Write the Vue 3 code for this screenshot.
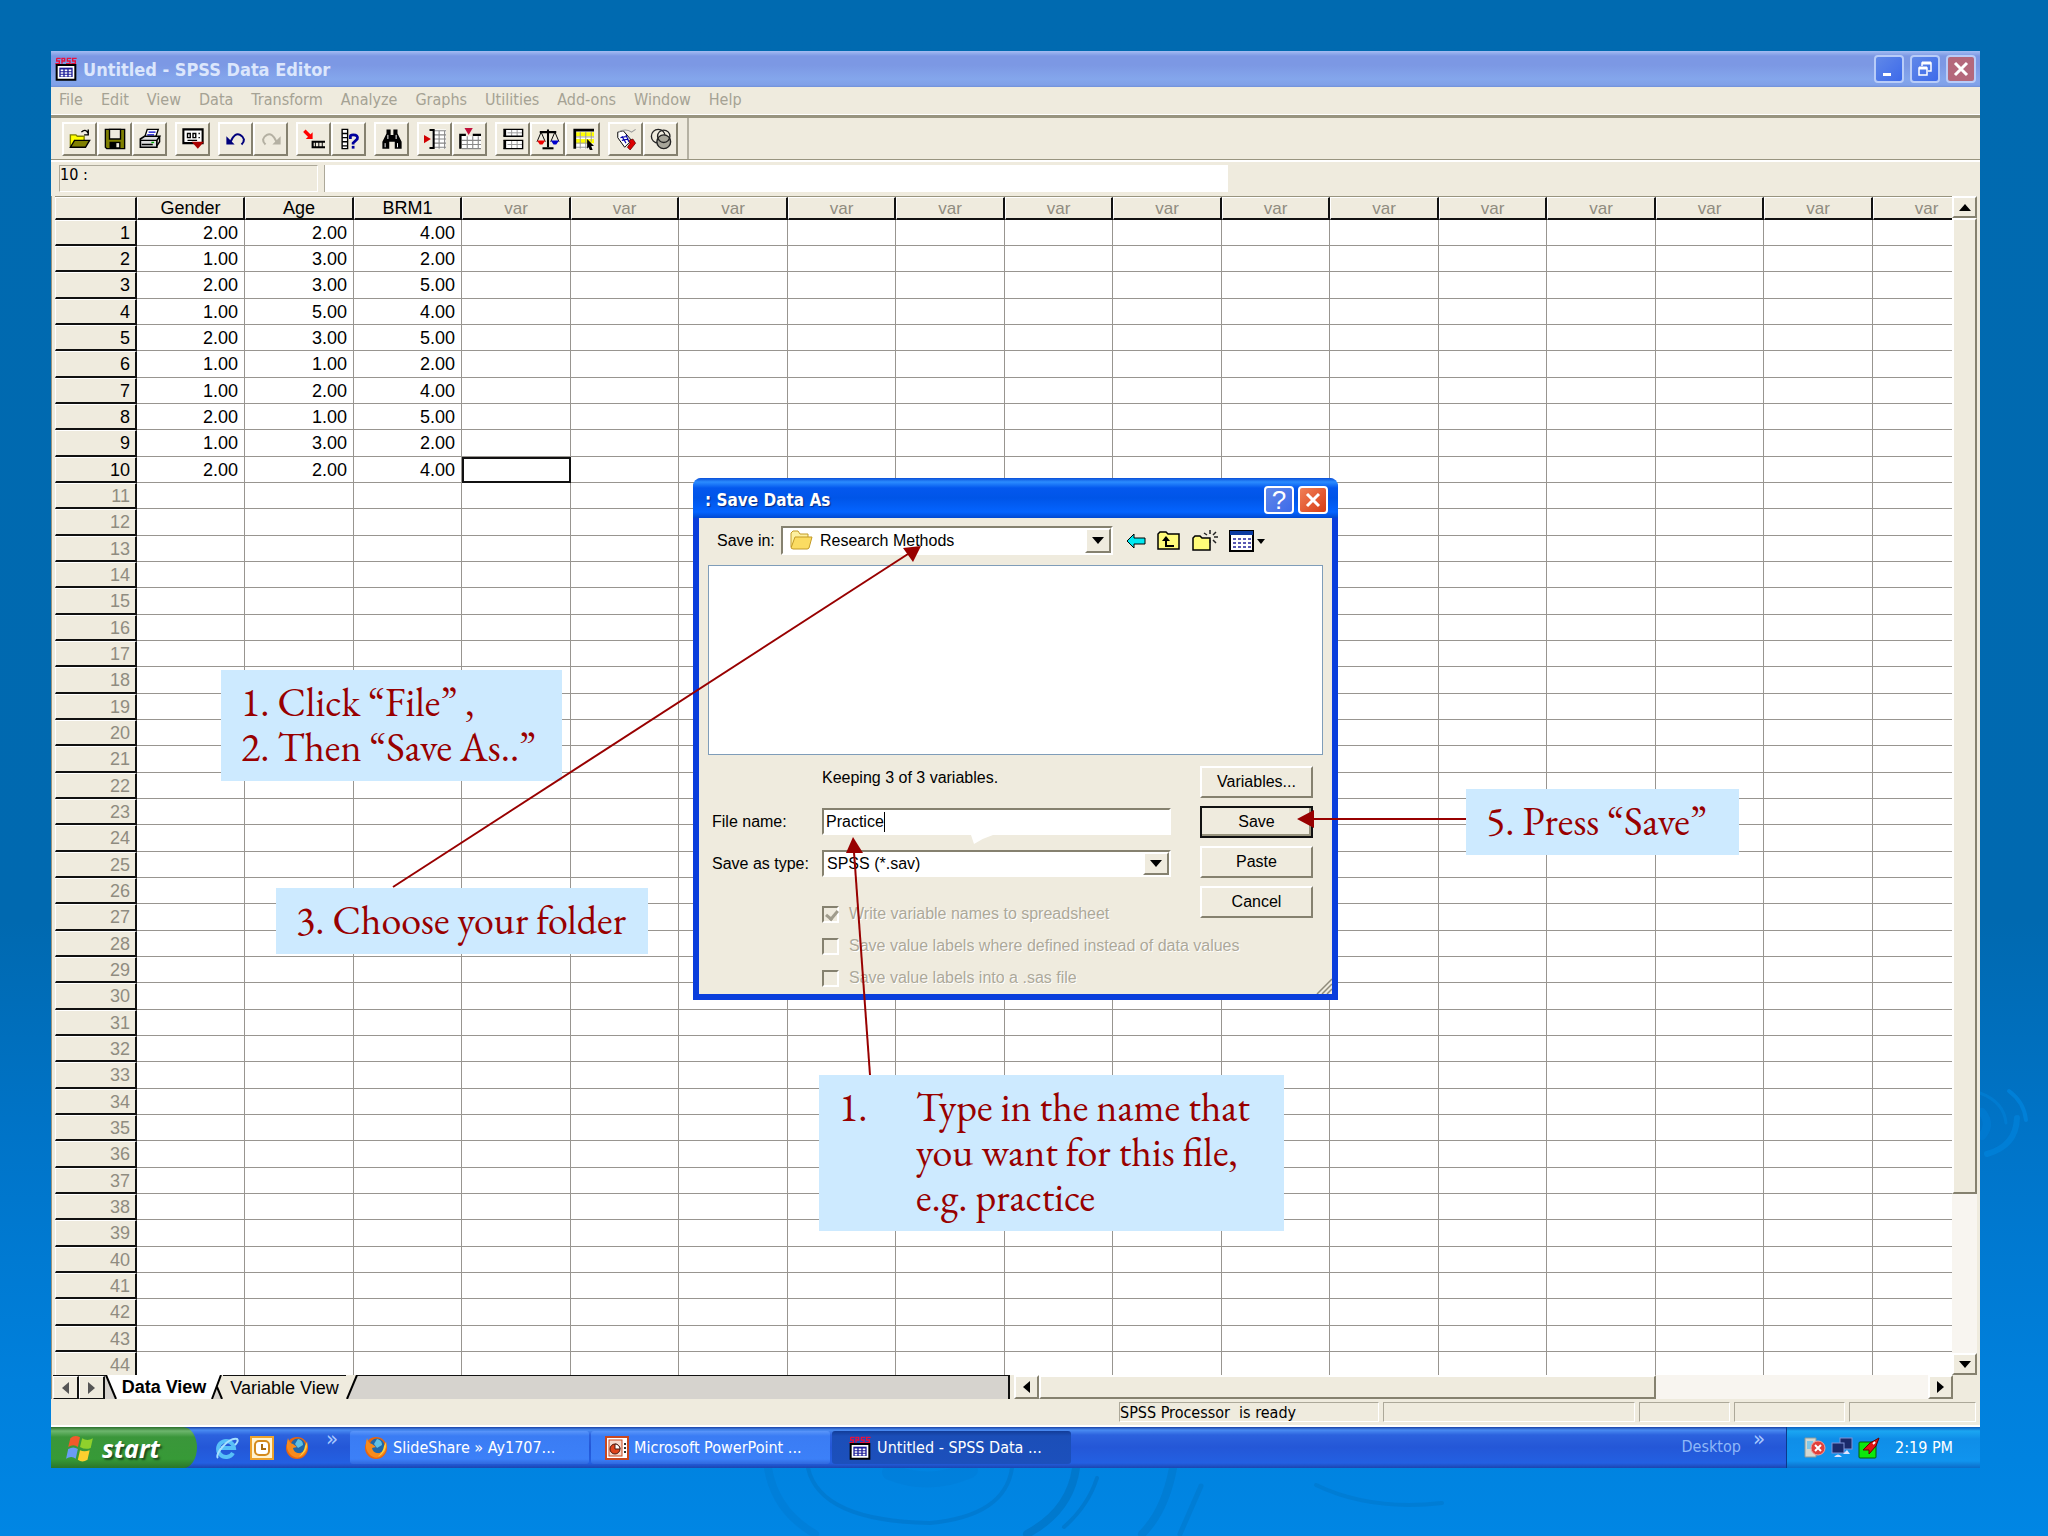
<template>
  <div class="slide">
    <!-- background ripples -->
    <svg class="ripples" width="1310" height="470" viewBox="0 0 1310 470" fill="none" aria-hidden="true">
      <g stroke="#0075c8" stroke-linecap="round">
        <path d="M28 402Q35 445 75 468" stroke-width="8" opacity=".3" />
        <path d="M68 402Q80 455 190 457Q265 450 272 402" stroke-width="4" opacity=".6" />
        <path d="M150 406Q190 422 230 404" stroke-width="16" opacity=".2" />
        <path d="M336 402Q330 445 287 468" stroke-width="8" opacity=".8" />
        <path d="M357 412Q348 440 324 461" stroke-width="4" opacity=".7" />
        <path d="M433 402Q425 445 402 468" stroke-width="8" opacity=".5" />
        <path d="M461 420L440 468" stroke-width="5" opacity=".5" />
        <path d="M576 419Q630 445 702 437" stroke-width="4" opacity=".5" />
      </g>
      <g stroke="#0083dc" stroke-linecap="round">
        <path d="M1240 27Q1264 36 1266 57" stroke-width="3" opacity=".5" />
        <path d="M1269 25Q1284 36 1286 54" stroke-width="4" opacity=".8" />
        <path d="M1277 52Q1276 80 1247 88" stroke-width="6" opacity=".7" />
        <path d="M1242 46Q1252 58 1242 70" stroke-width="8" opacity=".4" />
      </g>
    </svg>

    <div class="screen">
      <!-- title bar -->
      <header class="title-bar">
        <svg class="spss-icon" viewBox="0 0 16 18" v-html="spssIcon"></svg>
        <h1>Untitled - SPSS Data Editor</h1>
        <div class="window-buttons">
          <button class="win-btn" aria-label="Minimize">
            <svg viewBox="0 0 20 20"><rect x="4" y="14" width="8" height="3" fill="#fff" /></svg>
          </button>
          <button class="win-btn" aria-label="Restore">
            <svg viewBox="0 0 20 20" fill="none" stroke="#fff">
              <path d="M7 7V4h9v8h-3" stroke-width="1.5" /><path d="M7 4h9" stroke-width="3" />
              <rect x="4" y="9" width="8" height="7" stroke-width="1.5" /><path d="M4 9h8" stroke-width="3" />
            </svg>
          </button>
          <button class="win-btn close-faded" aria-label="Close">
            <svg viewBox="0 0 20 20"><path d="M4 4L16 16M16 4L4 16" stroke="#fff" stroke-width="3" /></svg>
          </button>
        </div>
      </header>

      <!-- menu -->
      <nav class="menu-bar">
        <button v-for="item in menus" :key="item">{{ item }}</button>
      </nav>

      <!-- tool bar -->
      <div class="tool-bar">
        <div v-for="(group, index) in toolGroups" :key="index" class="tool-group">
          <button v-for="tool in group" :key="tool" :aria-label="tool">
            <svg viewBox="0 0 16 16" v-html="toolIcons[tool]"></svg>
          </button>
        </div>
      </div>

      <!-- cell editor -->
      <div class="cell-bar">
        <label class="cell-name" for="cell-editor">10 :</label>
        <input id="cell-editor" class="cell-editor" type="text" />
      </div>

      <!-- data grid -->
      <div class="grid-area">
        <div class="grid-clip">
          <table class="grid">
            <thead>
              <tr>
                <th class="corner"></th>
                <th v-for="(name, index) in columns" :key="index" :class="{ unused: name === 'var' }">{{ name }}</th>
              </tr>
            </thead>
            <tbody>
              <tr v-for="row in 44" :key="row">
                <th :class="{ unused: row > 10 }">{{ row }}</th>
                <td
                  v-for="(name, index) in columns"
                  :key="index"
                  :class="{ selected: row === 10 && index === 3 }"
                >{{ cellValue(row, index) }}</td>
              </tr>
            </tbody>
          </table>
        </div>
        <div class="v-scroll">
          <button aria-label="Scroll up"><svg viewBox="0 0 12 7"><path d="M0 7L6 0L12 7z" /></svg></button>
          <div class="v-thumb"></div>
          <div class="track"></div>
          <button aria-label="Scroll down"><svg viewBox="0 0 12 7"><path d="M0 0L6 7L12 0z" /></svg></button>
        </div>
      </div>

      <!-- sheet tabs and horizontal scroll bar -->
      <div class="sheet-bar">
        <div class="sheet-tabs">
          <button class="tab-nav" aria-label="Previous sheet"><svg viewBox="0 0 7 12"><path d="M7 0L0 6L7 12z" /></svg></button>
          <button class="tab-nav" aria-label="Next sheet"><svg viewBox="0 0 7 12"><path d="M0 0L7 6L0 12z" /></svg></button>
          <svg class="slant" viewBox="0 0 12 24"><path d="M1 0h11v24h-2z" fill="#fff" /><path d="M1 0L11 24" stroke="#000" stroke-width="2" /></svg>
          <button class="tab active">Data View</button>
          <svg class="slant" viewBox="0 0 12 24">
            <path d="M0 0h10L2 24H0z" fill="#fff" /><path d="M10 0h2v24h-2L6 12z" fill="#efebde" />
            <path d="M10 0L1 24M6 12L11 24" stroke="#000" stroke-width="2" fill="none" />
          </svg>
          <button class="tab">Variable View</button>
          <svg class="slant" viewBox="0 0 12 24"><path d="M0 0h11L1 24H0z" fill="#efebde" /><path d="M11 0L1 24" stroke="#000" stroke-width="2" /></svg>
        </div>
        <div class="h-scroll">
          <button aria-label="Scroll left"><svg viewBox="0 0 7 12"><path d="M7 0L0 6L7 12z" /></svg></button>
          <div class="h-thumb"></div>
          <div class="track"></div>
          <button aria-label="Scroll right"><svg viewBox="0 0 7 12"><path d="M0 0L7 6L0 12z" /></svg></button>
        </div>
      </div>

      <!-- status bar -->
      <footer class="status-bar">
        <span class="panel wide">SPSS Processor&nbsp; is ready</span>
        <span class="panel middle"></span>
        <span class="panel small"></span>
        <span class="panel medium"></span>
        <span class="panel large"></span>
      </footer>

      <!-- task bar -->
      <div class="task-bar">
        <button class="start">
          <svg viewBox="0 0 28 28">
            <path d="M5 5Q9 1 14 4L12 13Q8 10 3 13z" fill="#f0592b" />
            <path d="M16 5Q21 8 26 5L24 14Q19 16 14 13z" fill="#8fd02c" />
            <path d="M3 15Q8 12 12 15L10 24Q6 21 1 24z" fill="#6a9cf5" />
            <path d="M14 16Q18 18 23 16L21 25Q16 28 12 25z" fill="#fbcf2f" />
          </svg>
          start
        </button>
        <div class="quick-launch">
          <a href="#" aria-label="Internet Explorer">
            <svg viewBox="0 0 24 24" fill="none">
              <path d="M18 17A8 8 0 1 1 19 12H6" stroke="#58c0f8" stroke-width="4" />
              <path d="M3 22C-1 18 14 1 22 3Q24 5 20 9" stroke="#a6e0ff" stroke-width="2" />
            </svg>
          </a>
          <a href="#" aria-label="Outlook">
            <svg viewBox="0 0 24 24">
              <rect x="1" y="1" width="22" height="22" fill="#fff3d0" stroke="#eda32c" stroke-width="2" />
              <rect x="5" y="5" width="14" height="14" rx="4" fill="#fff" stroke="#d48a1c" stroke-width="2" />
              <path d="M12 8v5h4" stroke="#a86a10" stroke-width="2" fill="none" />
            </svg>
          </a>
          <a href="#" aria-label="Firefox"><svg viewBox="0 0 24 24" v-html="firefoxIcon"></svg></a>
        </div>
        <span class="chevron">»</span>
        <div class="tasks">
          <button class="task">
            <svg viewBox="0 0 24 24" v-html="firefoxIcon"></svg>SlideShare » Ay1707...
          </button>
          <button class="task">
            <svg viewBox="0 0 24 24">
              <rect x="1" y="1" width="22" height="22" fill="#fff" stroke="#c9471f" stroke-width="2" />
              <rect x="4" y="4" width="13" height="16" fill="#f6d9cc" stroke="#c9471f" />
              <circle cx="10" cy="13" r="5" fill="#e0451c" stroke="#4a1a10" /><path d="M10 13V8a5 5 0 0 1 5 5z" fill="#fff" stroke="#4a1a10" />
              <path d="M19 8h2M19 12h2M19 16h2" stroke="#333" stroke-width="2" />
            </svg>Microsoft PowerPoint ...
          </button>
          <button class="task pressed">
            <svg viewBox="0 0 16 18" v-html="spssIcon"></svg>Untitled - SPSS Data ...
          </button>
        </div>
        <span class="desktop-label">Desktop</span>
        <span class="chevron desktop-chevron">»</span>
        <div class="tray">
          <svg viewBox="0 0 22 22">
            <path d="M1 1h11v19H1z" fill="#d5d8d0" stroke="#8b9a9a" /><path d="M3 4h6v8H3z" fill="#7fc7e8" />
            <circle cx="14" cy="11" r="7" fill="#e2403a" stroke="#f3a09c" /><path d="M11 8l6 6M17 8l-6 6" stroke="#fff" stroke-width="2" />
          </svg>
          <svg viewBox="0 0 22 22">
            <rect x="9" y="1" width="12" height="11" fill="#1b2a6b" stroke="#8094d8" />
            <rect x="1" y="6" width="12" height="10" fill="#1b2a6b" stroke="#8094d8" />
            <path d="M3 20q4-5 8 0zM12 17h7l-3-4z" fill="#dfe4ff" />
          </svg>
          <svg viewBox="0 0 22 22">
            <rect x="1" y="5" width="17" height="16" rx="1" fill="#0ce80c" stroke="#075c07" />
            <path d="M21 1L18 9L11 17L11 13L5 13L12 6z" fill="#e31212" stroke="#5c0505" /><path d="M15 7l2-2" stroke="#fff" stroke-width="2" />
          </svg>
          <time>2:19 PM</time>
        </div>
      </div>
    </div>

    <!-- save dialog -->
    <section class="dialog" aria-label="Save Data As">
      <header class="dialog-title">
        <h2>: Save Data As</h2>
        <button class="win-btn help" aria-label="Help">?</button>
        <button class="win-btn close" aria-label="Close">
          <svg viewBox="0 0 20 20"><path d="M4 4L16 16M16 4L4 16" stroke="#fff" stroke-width="3" /></svg>
        </button>
      </header>
      <div class="dialog-body">
        <div class="folder-row">
          <label for="folder">Save in:</label>
          <div class="combo folder-combo">
            <svg class="folder-icon" viewBox="0 0 24 20">
              <path d="M2 17V3l2-2h5l2 3h8v3" fill="#fdf0a0" stroke="#c39a26" />
              <path d="M2 18L6 7h17l-3 11q-1 1-2 1H4z" fill="#fbdc62" stroke="#c39a26" />
            </svg>
            <select id="folder"><option>Research Methods</option></select>
            <span class="combo-arrow"><svg viewBox="0 0 12 7"><path d="M0 0L6 7L12 0z" /></svg></span>
          </div>
          <div class="folder-tools">
            <button aria-label="Back"><svg width="20" height="16" viewBox="0 0 20 16"><path d="M1 8L8 1V5H19V11H8V15z" fill="#00e8f0" stroke="#000" /></svg></button>
            <button aria-label="Up one level">
              <svg width="24" height="20" viewBox="0 0 24 20"><path d="M1 18V3L3 1H9L11 3H22V18z" fill="#fffb7a" stroke="#000" stroke-width="1.5" /><path d="M9 9v6h8" stroke="#000" stroke-width="2" fill="none" /><path d="M5 10L9 5L13 10z" /></svg>
            </button>
            <button aria-label="New folder">
              <svg width="26" height="22" viewBox="0 0 26 22"><path d="M1 20V8L3 6H8L10 8H18V20z" fill="#fffb7a" stroke="#000" stroke-width="1.5" /><path d="M18 0v4M18 10v3M12 3l3 2M24 2l-3 3M22 7h4M21 10l3 3" stroke="#222" stroke-width="1.5" /></svg>
            </button>
            <button aria-label="View menu">
              <svg width="36" height="22" viewBox="0 0 36 22">
                <rect x="1" y="1" width="23" height="20" fill="#fff" stroke="#000" stroke-width="2" /><rect x="1" y="1" width="23" height="4" fill="#0a3aa0" />
                <path d="M4 9h18M4 13h18M4 17h18" stroke="#22229a" stroke-width="1.5" stroke-dasharray="3 2" /><path d="M28 9h8l-4 5z" />
              </svg>
            </button>
          </div>
        </div>
        <div class="file-list"></div>
        <div class="dialog-form">
          <div class="fields">
            <p class="keeping">Keeping 3 of 3 variables.</p>
            <div class="field">
              <label for="file-name">File name:</label>
              <div class="text-box">
                <input id="file-name" v-model="fileName" type="text" :size="fileName.length" />
                <span class="caret"></span>
              </div>
            </div>
            <div class="field">
              <label for="file-type">Save as type:</label>
              <div class="combo">
                <select id="file-type"><option>SPSS (*.sav)</option></select>
                <span class="combo-arrow"><svg viewBox="0 0 12 7"><path d="M0 0L6 7L12 0z" /></svg></span>
              </div>
            </div>
            <div class="options">
              <label v-for="option in options" :key="option.text">
                <input type="checkbox" :checked="option.checked" disabled />{{ option.text }}
              </label>
            </div>
          </div>
          <div class="dialog-buttons">
            <button>Variables...</button>
            <button class="default">Save</button>
            <button>Paste</button>
            <button>Cancel</button>
          </div>
        </div>
        <svg class="grip" viewBox="0 0 16 16" stroke="#8f8b7c" stroke-width="1.5"><path d="M1 16L16 1M6 16L16 6M11 16L16 11" /></svg>
        <svg class="pointer-tip" viewBox="0 0 22 9"><path d="M0 0h22Q12 3 3 9z" fill="#fff" /></svg>
      </div>
    </section>

    <!-- step notes -->
    <div class="note note-file"><p>1. Click “File” ,</p><p>2. Then “Save As..”</p></div>
    <div class="note note-folder"><p>3. Choose your folder</p></div>
    <div class="note note-press"><p>5. Press “Save”</p></div>
    <ol class="note note-name"><li><span>1.</span><p>Type in the name that<br />you want for this file,<br />e.g. practice</p></li></ol>

    <!-- arrows from the notes -->
    <svg class="arrows" width="1100" height="540" viewBox="380 540 1100 540" aria-hidden="true">
      <g stroke="#980000" stroke-width="2">
        <path d="M393 887L908 554" /><path d="M870 1075L854 852" /><path d="M1466 819H1312" />
      </g>
      <path d="M921 546L903 548L913 562zM853 837L846 853H863zM1297 819L1314 810V828z" fill="#980000" />
    </svg>
  </div>
</template>

<script setup>
import { ref } from 'vue'

const menus = ['File', 'Edit', 'View', 'Data', 'Transform', 'Analyze', 'Graphs', 'Utilities', 'Add-ons', 'Window', 'Help']

const columns = ['Gender', 'Age', 'BRM1', ...Array(14).fill('var')]

// one line per case: Gender, Age, BRM1
const cases = [
  [2, 2, 4],
  [1, 3, 2],
  [2, 3, 5],
  [1, 5, 4],
  [2, 3, 5],
  [1, 1, 2],
  [1, 2, 4],
  [2, 1, 5],
  [1, 3, 2],
  [2, 2, 4],
]

const cellValue = (row, index) => {
  const value = cases[row - 1]?.[index]
  return value === undefined ? '' : value.toFixed(2)
}

const fileName = ref('Practice')

const options = [
  { text: 'Write variable names to spreadsheet', checked: true },
  { text: 'Save value labels where defined instead of data values', checked: false },
  { text: 'Save value labels into a .sas file', checked: false },
]

const toolGroups = [
  ['Open', 'Save', 'Print'],
  ['Dialog Recall'],
  ['Undo', 'Redo'],
  ['Go to Case', 'Variables'],
  ['Find'],
  ['Insert Case', 'Insert Variable'],
  ['Split File', 'Weight Cases', 'Select Cases'],
  ['Value Labels', 'Use Sets'],
]

const toolIcons = {
  Open: '<path d="M1 14V5h4l1 1h5v3" fill="#ff0" stroke="#808000"/><path d="M1 14L4 9h11l-3 5z" fill="#808000" stroke="#000"/><path d="M9 3q3-3 5 1M14 1v4h-3" fill="none" stroke="#000"/>',
  Save: '<path d="M1 1h14v14H2l-1-1z" fill="#808000" stroke="#000"/><path d="M4 1h8v7H4z" fill="#efebde" stroke="#000"/><path d="M4 10h8v5H4z" fill="#000"/><path d="M9 11h2v3H9z" fill="#efebde"/>',
  Print: '<path d="M4 7l2-6h8l-2 6" fill="#fff" stroke="#000"/><path d="M7 3h5M6 5h5" stroke="#00c"/><path d="M1 8l3-2h11l-2 3v5H1z" fill="#ddd" stroke="#000" stroke-width="1.2"/><path d="M1 9h12M2 12h8M13 13l2-3V6" stroke="#000" fill="none"/><path d="M9 10h2v1H9z" fill="#0a0"/>',
  'Dialog Recall': '<path d="M1 1h14v10H1z" fill="#fff" stroke="#000" stroke-width="1.5"/><path d="M4 4h2v3H4zM8 4h2v3H8z" fill="none" stroke="#000"/><path d="M12 4h1M12 7h1M4 9h7" stroke="#000"/><path d="M7 10h9l-4.500 5z" fill="#a00"/>',
  Undo: '<path d="M4 10Q7 3 11 5Q16 8 12 12" fill="none" stroke="#00007c" stroke-width="1.5"/><path d="M1 6v6h6z" fill="#00007c"/>',
  Redo: '<path d="M12 10Q9 3 5 5Q0 8 4 12" fill="none" stroke="#b4b0a2" stroke-width="1.5"/><path d="M15 6v6H9z" fill="#b4b0a2"/>',
  'Go to Case': '<path d="M1 2L5 6" stroke="#f00" stroke-width="2.5"/><path d="M7 3v5H2z" fill="#f00"/><path d="M16 10H7v4h9" fill="none" stroke="#000" stroke-width="1.5"/><path d="M9 10v4M11.500 10v4M14 10v4" stroke="#000" stroke-width=".7"/>',
  Variables: '<path d="M3 1h4v14H3z" fill="#fff" stroke="#000"/><path d="M3 4h4M3 7h4M3 10h4M3 13h4" stroke="#000"/><path d="M9 8V6q0-1 2-1 4 0 3 3l-3 3v1" fill="none" stroke="#00009c" stroke-width="2"/><path d="M10 13h2v2h-2z" fill="#00009c"/>',
  Find: '<path d="M4 1h3v4h2V1h3v3l3 6v5h-5v-5H6v5H1v-5l3-6z"/><path d="M3 11v3M12 11v3M5 5v3M11 5v3" stroke="#fff" stroke-width=".7"/>',
  'Insert Case': '<path d="M6 1h10v14H6z" fill="#fff"/><path d="M7 2h9M7 5h9M7 8h9M7 11h9M7 14h9M11 2v13M15 2v13" stroke="#888" stroke-width=".8"/><path d="M4 1.500h3v13H4" fill="none" stroke="#000" stroke-width="1.5"/><path d="M0 5l5 3-5 3z" fill="#d00000"/>',
  'Insert Variable': '<path d="M2 6h14v9H2z" fill="#fff"/><path d="M2 9h14M2 12h14M2 15h14M6 6v9M10 6v9M14 6v9" stroke="#888" stroke-width=".8"/><path d="M1 15V5h4M10 5h6" fill="none" stroke="#000" stroke-width="1.7"/><path d="M4 0h6L7 5z" fill="#c0103a"/>',
  'Split File': '<path d="M2 1h13v5H2zM2 9h13v6H2z" fill="#fff"/><path d="M4 3.500h11M4 12h11M7 1v5M11 1v5M7 9v6M11 9v6" stroke="#999" stroke-width=".7"/><path d="M2 1v5M2 9v6" stroke="#000" stroke-width="2"/><path d="M1 1h14v5H1M1 9h14v6H1" fill="none" stroke="#000"/>',
  'Weight Cases': '<path d="M8 1v13M2 3h12" stroke="#000" stroke-width="1.5"/><path d="M4 14h8v1.500H4z"/><path d="M3 3L0 10M3 3l3 7M13 3l-3 7M13 3l3 7" stroke="#000" stroke-width=".7"/><path d="M0 9h6l-2 3H2z" fill="#e00"/><path d="M10 9h6l-2 3h-2z" fill="#00c"/>',
  'Select Cases': '<path d="M1 1h14v14H1z" fill="#fff"/><path d="M3 3h13v3H3zM3 8h13v3H3z" fill="#ff0"/><path d="M3 6.500h13M3 11h9M3 14h8M6 3v12M10 3v12M14 3v7" stroke="#999" stroke-width=".7"/><path d="M2 1v14M1 1.500h15" stroke="#000" stroke-width="2"/><path d="M11 8l5 5h-2l1 3h-2l-1-2-1 1z"/>',
  'Value Labels': '<path d="M2 3l4-1 6 7-5 5-5-7z" fill="#fff" stroke="#000" stroke-width=".7"/><path d="M10 9l3-1 2 3-4 5-2-2 2-3z" fill="#d00" stroke="#500" stroke-width=".5"/><path d="M5 6l3 5M8 5l2 5M5 9l5-1M4 7l5-1" stroke="#00a" stroke-width=".8"/><path d="M2 3Q8 0 12 3l3-2" stroke="#999" fill="none" stroke-width=".8"/>',
  'Use Sets': '<circle cx="6" cy="6" r="5" fill="#efebde" stroke="#222"/><circle cx="10" cy="10" r="5" fill="#a8a69a" stroke="#222"/><circle cx="10" cy="6" r="4.500" fill="none" stroke="#222"/>',
}

const spssIcon =
  '<path d="M1 1h3M1 1v2h2v2H0M5 5V1h2v2H5M12 1H9v2h2v2H8M16 1h-3v2h2v2h-3" fill="none" stroke="#e8103c"/><path d="M1 6h14v11H1z" fill="#fff" stroke="#000" stroke-width="1.5"/><path d="M3 8h10v7H3z" fill="#1c1c98"/><path d="M4 10h8M4 12h8M4 14h8" stroke="#fff" stroke-width="1.2" stroke-dasharray="2 1"/>'

const firefoxIcon =
  '<circle cx="12" cy="12" r="11" fill="#e8650f"/><circle cx="13" cy="10" r="7.500" fill="#1f66a8"/><path d="M13 3q5 1 5 6l-5 3-3-4z" fill="#5fc0e4"/><path d="M3 2Q0 12 5 18Q12 25 19 19Q24 14 22 5Q22 14 16 17Q9 18 8 12L12 11L8 8Q4 7 3 2z" fill="#f78b1c"/><path d="M22 6Q23 17 13 21Q19 17 20 10z" fill="#ffd23e"/>'
</script>

<style>
body {
  margin: 0;
}
</style>

<style scoped>
* {
  box-sizing: border-box;
}

button,
input,
select {
  margin: 0;
  padding: 0;
  border: 0;
  border-radius: 0;
  background: none;
  color: inherit;
  font: inherit;
}

h1,
h2,
p {
  margin: 0;
}

svg {
  display: block;
  flex: none;
}

.slide {
  position: relative;
  min-height: 100vh;
  padding: 51px 68px 68px 51px;
  overflow: hidden;
  background: linear-gradient(#006ab0 0%, #0069b0 60%, #0074c8 74%, #0080dc 90%, #0086e4 100%);
  font-family: "DejaVu Sans Condensed", "Noto Sans", sans-serif;
  font-size: 16px;
}

.ripples {
  position: absolute;
  bottom: 0;
  left: 740px;
}

.screen {
  position: relative;
  background: #efebde;
}

/* title bar */
.title-bar {
  display: flex;
  align-items: center;
  height: 36px;
  padding: 0 4px 0 3px;
  gap: 5px;
  background: linear-gradient(#a4bdf3 0, #7c98e4 5px, #7c98e4 14px, #84a6ec 28px, #80a0e8 34px, #7090d8 36px);
}

.spss-icon {
  width: 24px;
  height: 24px;
}

.title-bar h1 {
  flex: 1;
  color: #dbe6fc;
  font-size: 18px;
  font-weight: bold;
}

.window-buttons {
  display: flex;
  gap: 6px;
}

.win-btn {
  display: flex;
  align-items: center;
  justify-content: center;
  width: 30px;
  height: 28px;
  border: 2px solid #b8ccf8;
  border-radius: 4px;
  background: linear-gradient(135deg, #6088e8, #3d6aea);
  color: #fff;
}

.win-btn svg {
  width: 20px;
  height: 20px;
}

.win-btn.close-faded {
  background: #b4687c;
}

.menu-bar {
  display: flex;
  gap: 18px;
  height: 28px;
  padding-left: 8px;
  border-bottom: 1px solid #fff;
}

.menu-bar button {
  padding-bottom: 2px;
  color: #a5a294;
}

/* tool bar */
.tool-bar {
  display: flex;
  align-items: center;
  gap: 8px;
  height: 45px;
  padding: 0 11px;
  border-top: 3px solid #98947f;
  border-bottom: 1px solid #98947f;
}

.tool-group {
  display: flex;
}

.tool-group:last-child {
  height: 100%;
  align-items: center;
  padding-right: 9px;
  border-right: 2px solid #b5b1a2;
}

.tool-group button,
.v-scroll button,
.h-scroll button,
.v-thumb,
.h-thumb,
.combo-arrow {
  display: flex;
  align-items: center;
  justify-content: center;
  border: 2px solid;
  border-color: #fff #85816f #85816f #fff;
  background: #efebde;
}

.tool-group button {
  width: 35px;
  height: 34px;
}

.tool-group svg {
  width: 24px;
  height: 22px;
}

/* cell editor */
.cell-bar {
  display: flex;
  gap: 6px;
  height: 36px;
  padding: 3px 8px 4px;
  border-top: 2px solid #fff;
}

.cell-name {
  width: 259px;
  border: 1px solid;
  border-color: #aca899 #fff #fff #aca899;
  line-height: 18px;
}

.cell-editor {
  width: 904px;
  border-left: 1px solid #aca899;
  background: #fff;
}

/* data grid */
.grid-area {
  display: flex;
  height: 1179px;
  padding: 0 3px;
  border-left: 1px solid #98947f;
}

.grid-clip {
  flex: 1;
  min-width: 0;
  overflow: hidden;
  border-top: 1px solid #98947f;
  background: #fff;
}

.grid {
  width: 1926px;
  table-layout: fixed;
  border-collapse: separate;
  border-spacing: 0;
  font-family: "Liberation Sans", Arial, sans-serif;
  font-size: 18px;
  line-height: 20px;
}

.grid th,
.grid td {
  padding: 0;
  font-weight: normal;
}

.grid thead th {
  width: 108px;
  height: 23px;
  border: solid;
  border-width: 1px 2px 2px 1px;
  border-color: #fff #111 #111 #fff;
  background: #efebde;
}

.grid thead th:nth-child(odd) {
  width: 109px;
}

.grid thead th.corner {
  width: 82px;
}

.grid thead .unused {
  padding-top: 2px;
  color: #8f8c80;
  font-size: 17px;
  line-height: 18px;
}

.grid tbody tr {
  height: 26px;
}

.grid tbody tr:nth-child(3n) {
  height: 27px;
}

.grid tbody th {
  padding-right: 5px;
  border: solid;
  border-width: 1px 2px 2px 1px;
  border-color: #fff #111 #111 #fff;
  background: #efebde;
  text-align: right;
}

.grid tbody th.unused {
  color: #8f8c80;
}

.grid td {
  padding: 0 6px 0 0;
  border-right: 1px solid #989590;
  border-bottom: 1px solid #989590;
  text-align: right;
}

.grid td.selected {
  border: 2px solid #111;
}

.v-scroll {
  display: flex;
  flex-direction: column;
  width: 25px;
}

.v-scroll button {
  height: 22px;
}

.v-thumb {
  height: 976px;
}

.track {
  flex: 1;
  background: #f8f5f0;
}

.v-scroll svg,
.combo-arrow svg {
  width: 12px;
  height: 7px;
}

/* sheet tabs */
.sheet-bar {
  display: flex;
  gap: 4px;
  height: 24px;
  padding: 0 27px 0 1px;
  border-left: 1px solid #98947f;
}

.sheet-tabs {
  display: flex;
  width: 957px;
  border-top: 1px solid #111;
  border-right: 2px solid #111;
  background: #d6d3ce;
}

.tab-nav {
  display: flex;
  align-items: center;
  justify-content: center;
  width: 26px;
  border: solid;
  border-width: 1px 2px 1px 1px;
  border-color: #fff #111 #111 #fff;
  background: #efebde;
  color: #555;
}

.tab-nav svg,
.h-scroll svg {
  width: 7px;
  height: 12px;
  fill: currentColor;
}

.slant {
  width: 12px;
  height: 24px;
  margin-top: -1px;
}

.tab {
  width: 123px;
  background: #efebde;
  font-family: "Liberation Sans", Arial, sans-serif;
  font-size: 18px;
  line-height: 22px;
  white-space: nowrap;
}

.tab.active {
  width: 94px;
  margin-top: -1px;
  background: #fff;
  font-weight: bold;
}

.h-scroll {
  display: flex;
  flex: 1;
}

.h-scroll button {
  width: 25px;
}

.h-thumb {
  width: 617px;
}

/* status bar */
.status-bar {
  display: flex;
  justify-content: flex-end;
  gap: 4px;
  height: 28px;
  padding: 3px 4px;
  border-bottom: 2px solid #fff;
}

.panel {
  border: 1px solid;
  border-color: #aca899 #fff #fff #aca899;
  line-height: 20px;
  white-space: nowrap;
}

.panel.wide {
  width: 260px;
}

.panel.middle {
  width: 252px;
}

.panel.small {
  width: 91px;
}

.panel.medium {
  width: 111px;
}

.panel.large {
  width: 127px;
}

/* task bar */
.task-bar {
  display: flex;
  height: 41px;
  background: linear-gradient(#1941a5 0, #4a8cf2 3px, #2c62de 8px, #2457d7 20px, #2360e2 36px, #1c45b0 41px);
  color: #fff;
}

.start {
  display: flex;
  align-items: center;
  width: 146px;
  padding-left: 14px;
  gap: 7px;
  border-radius: 0 16px 16px 0 / 0 24px 24px 0;
  background: linear-gradient(#2b6e2b 0, #6db66d 4px, #3a963a 10px, #379a37 32px, #2a752a 41px);
  font-family: "Open Sans", sans-serif;
  font-size: 25px;
  font-style: italic;
  font-weight: bold;
  line-height: 30px;
  text-shadow: 2px 2px 2px #1d4a1d;
}

.start svg {
  width: 30px;
  height: 30px;
}

.quick-launch {
  display: flex;
  align-items: center;
  gap: 11px;
  padding-left: 18px;
}

.quick-launch svg,
.task svg {
  width: 24px;
  height: 24px;
}

.chevron {
  padding: 2px 12px 0 17px;
  color: #a9c9ff;
  font-size: 22px;
  line-height: 20px;
}

.tasks {
  display: flex;
  flex: 1;
  gap: 2px;
  padding: 4px 0;
}

.task {
  display: flex;
  align-items: center;
  gap: 5px;
  width: 239px;
  padding-left: 14px;
  border-radius: 3px;
  background: linear-gradient(#5a96fa 0, #3a7cf4 5px, #3c80f8 28px, #2f68de);
  white-space: nowrap;
}

.task.pressed {
  padding-left: 16px;
  background: linear-gradient(#123c98 0, #1b4eb8 5px, #1c50bc);
}

.desktop-label {
  color: #8fb8f8;
  line-height: 40px;
}

.desktop-chevron {
  padding: 2px 21px 0 12px;
}

.tray {
  display: flex;
  align-items: center;
  gap: 5px;
  width: 194px;
  padding-left: 17px;
  border-left: 1px solid #0b3a8c;
  background: linear-gradient(#0d5fc0 0, #1ba6f2 4px, #0f8ee8 12px, #1094ee 34px, #0c6cc8 41px);
}

.tray svg {
  width: 22px;
  height: 22px;
}

.tray time {
  padding-left: 10px;
}

/* save dialog */
.dialog {
  position: absolute;
  top: 478px;
  left: 693px;
  width: 645px;
  padding: 0 6px 6px;
  border-radius: 9px 9px 0 0;
  background: #0a3edc;
  font-family: "Liberation Sans", Arial, sans-serif;
  font-size: 16px;
}

.dialog-title {
  display: flex;
  align-items: center;
  gap: 4px;
  height: 40px;
  margin: 0 -6px;
  padding: 4px 10px 0 12px;
  border-radius: 8px 8px 0 0;
  background: linear-gradient(#0a4fd8 0, #2b8cff 4px, #0458ee 10px, #0055e8 20px, #0464ff 34px, #0048d0 40px);
  color: #fff;
}

.dialog-title h2 {
  flex: 1;
  font-family: "DejaVu Sans Condensed", sans-serif;
  font-size: 17px;
  text-shadow: 1px 1px 1px #0a2a80;
}

.dialog-title .win-btn {
  border-color: #fff;
}

.win-btn.help {
  font-size: 26px;
  line-height: 24px;
}

.win-btn.close {
  background: linear-gradient(135deg, #f08058, #d83c14);
}

.dialog-body {
  position: relative;
  height: 476px;
  padding: 8px 9px 0;
  background: #efebde;
}

.folder-row {
  display: flex;
  align-items: center;
  height: 29px;
  margin-bottom: 10px;
  padding-left: 9px;
}

.folder-row > label {
  width: 64px;
}

.combo,
.text-box {
  position: relative;
  display: flex;
  flex: 1;
  height: 100%;
  border: 2px solid;
  border-color: #85816f #fff #fff #85816f;
  background: #fff;
}

.combo select {
  flex: 1;
  appearance: none;
  padding-left: 3px;
  outline: none;
}

.folder-combo {
  flex: none;
  width: 332px;
}

.folder-combo select {
  padding-left: 7px;
}

.folder-icon {
  width: 24px;
  height: 20px;
  margin: 2px 0 0 6px;
}

.combo-arrow {
  width: 26px;
  pointer-events: none;
}

.folder-tools {
  display: flex;
  align-items: center;
  gap: 11px;
  padding-left: 13px;
}

.file-list {
  height: 190px;
  border: 1px solid #7f9db9;
  background: #fff;
}

.dialog-form {
  display: flex;
  justify-content: space-between;
  padding: 11px 10px 0 4px;
}

.fields {
  width: 459px;
}

.keeping {
  height: 42px;
  padding-left: 110px;
  line-height: 24px;
}

.field {
  display: flex;
  align-items: center;
  height: 27px;
  margin-bottom: 15px;
}

.field > label {
  width: 110px;
}

.text-box {
  align-items: center;
  padding-left: 2px;
}

.text-box input {
  width: 58px;
  outline: none;
}

.caret {
  width: 1px;
  height: 20px;
  background: #000;
}

.options {
  display: flex;
  flex-direction: column;
  padding: 6px 0 0 110px;
}

.options label {
  display: flex;
  align-items: center;
  gap: 10px;
  height: 32px;
  color: #aca899;
  text-shadow: 1px 1px 0 #fff;
  white-space: nowrap;
}

.options input {
  position: relative;
  flex: none;
  width: 17px;
  height: 17px;
  border: 2px solid;
  border-color: #85816f #fff #fff #85816f;
  appearance: none;
}

.options input:checked::after {
  content: "";
  position: absolute;
  top: 0;
  left: 4px;
  width: 5px;
  height: 9px;
  border: solid #a09c8c;
  border-width: 0 3px 3px 0;
  transform: rotate(40deg);
}

.dialog-buttons {
  display: flex;
  flex-direction: column;
  gap: 8px;
  width: 113px;
}

.dialog-buttons button {
  height: 32px;
  border: 2px solid;
  border-color: #fff #85816f #85816f #fff;
}

.dialog-buttons .default {
  border-color: #111;
  box-shadow: inset -2px -2px 0 #98947f;
}

.grip {
  position: absolute;
  right: 0;
  bottom: 0;
  width: 16px;
  height: 16px;
}

.pointer-tip {
  position: absolute;
  top: 317px;
  left: 272px;
  width: 22px;
  height: 9px;
}

/* step notes */
.note {
  position: absolute;
  margin: 0;
  padding: 10px 20px 11px;
  background: #cdeaff;
  color: #980000;
  font-family: "EB Garamond", Garamond, "Liberation Serif", serif;
  font-size: 40px;
  line-height: 45px;
  list-style: none;
  white-space: nowrap;
}

.note-file {
  top: 670px;
  left: 221px;
  width: 341px;
}

.note-folder {
  top: 888px;
  left: 276px;
  width: 372px;
}

.note-press {
  top: 789px;
  left: 1466px;
  width: 273px;
}

.note-name {
  top: 1075px;
  left: 819px;
  width: 465px;
}

.note-name li {
  display: flex;
}

.note-name span {
  width: 77px;
}

.arrows {
  position: absolute;
  top: 540px;
  left: 380px;
}
</style>
